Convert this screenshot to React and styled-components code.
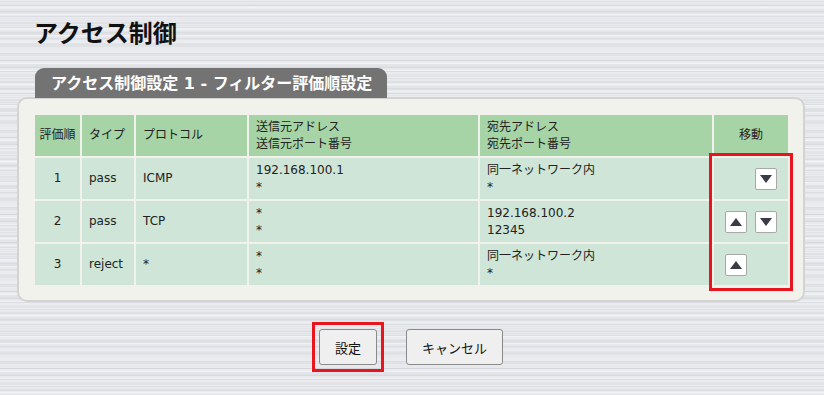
import { Fragment } from "react";
import styled, { createGlobalStyle } from "styled-components";

const GlobalStyle = createGlobalStyle`
  html, body {
    margin: 0;
    min-height: 395px;
  }
  body {
    font-family: "DejaVu Sans", "Noto Sans CJK JP", sans-serif;
    color: #222;
    background-color: #e2e4e8;
    background-image:
      repeating-linear-gradient(
        to bottom,
        rgba(255, 255, 255, 0.35) 0px,
        rgba(255, 255, 255, 0.35) 1px,
        transparent 1px,
        transparent 4px,
        rgba(0, 0, 0, 0.03) 4px,
        rgba(0, 0, 0, 0.03) 5px,
        transparent 5px,
        transparent 7px
      ),
      repeating-linear-gradient(
        to bottom,
        #dfe1e5 0px,
        #dfe1e5 2px,
        #e7e9ec 2px,
        #e7e9ec 5px,
        #dbdde2 5px,
        #dbdde2 6px,
        #eaecef 6px,
        #eaecef 9px,
        #e2e4e8 9px,
        #e2e4e8 11px
      );
  }
`;

const Page = styled.div`
  padding: 17px 19px 0 17px;
`;

const Title = styled.h1`
  margin: 0 0 22px 17px;
  font-family: "Noto Sans CJK JP", sans-serif;
  font-size: 24px;
  line-height: 29px;
  font-weight: 700;
  color: #111;
`;

const Tab = styled.div`
  display: inline-block;
  margin-left: 18px;
  height: 30px;
  padding: 0 15px 0 16px;
  background: #737373;
  border-radius: 9px 9px 0 0;
  color: #fff;
  font-family: "DejaVu Sans", "Noto Sans CJK JP", sans-serif;
  font-size: 16px;
  font-weight: 700;
  line-height: 31px;
  vertical-align: bottom;
`;

const Panel = styled.div`
  box-sizing: border-box;
  width: 788px;
  margin-top: -1px;
  padding: 16px 15px 15px 16px;
  background: #f2f2ec;
  border: 2px solid #d3d3d3;
  border-radius: 10px;
`;

const TableWrap = styled.div`
  position: relative;
`;

const Grid = styled.div`
  display: grid;
  grid-template-columns: 45px 52px 111px 229px 232px 74px;
  grid-auto-rows: 41px;
  gap: 2px;
  font-size: 12px;
  line-height: 17px;
`;

const HeadCell = styled.div`
  display: flex;
  flex-direction: column;
  justify-content: center;
  align-items: ${(p) => (p.$center ? "center" : "flex-start")};
  padding: 0 ${(p) => (p.$center ? "0" : "7px")};
  background: #a6d4a6;
  color: #222;
`;

const Cell = styled.div`
  display: flex;
  flex-direction: column;
  justify-content: center;
  align-items: ${(p) => (p.$center ? "center" : "flex-start")};
  padding: 0 ${(p) => (p.$center ? "0" : "7px")};
  background: #cee5d7;
  color: #222;
`;

const MoveCell = styled.div`
  display: flex;
  align-items: center;
  justify-content: center;
  gap: 8px;
  background: #cee5d7;
`;

const ArrowButton = styled.button`
  box-sizing: border-box;
  width: 22px;
  height: 22px;
  padding: 0;
  display: flex;
  align-items: center;
  justify-content: center;
  background: #fff;
  border: 1px solid #a8a8a8;
  border-radius: 2px;
  visibility: ${(p) => (p.$hidden ? "hidden" : "visible")};
`;

const Highlight = styled.div`
  position: absolute;
  left: 674px;
  top: 38px;
  width: 84px;
  height: 138px;
  box-sizing: border-box;
  border: 3px solid #e8141e;
  pointer-events: none;
`;

const Actions = styled.div`
  display: flex;
  justify-content: center;
  gap: 29px;
  margin-top: 27px;
`;

const ActionButton = styled.button`
  position: relative;
  height: 36px;
  padding: 0 15px;
  background: #efefef;
  border: 1px solid #8a8a8a;
  border-radius: 3px;
  font-family: "Noto Sans CJK JP", sans-serif;
  font-size: 13px;
  color: #111;

  &::after {
    content: "";
    display: ${(p) => (p.$marked ? "block" : "none")};
    position: absolute;
    inset: -8px;
    border: 3px solid #e8141e;
    pointer-events: none;
  }
`;

const Arrow = ({ up }) => (
  <svg width="12" height="8" viewBox="0 0 12 8">
    <polygon points={up ? "6,0 12,8 0,8" : "0,0 12,0 6,8"} fill="#3a3b44" />
  </svg>
);

const rules = [
  { no: 1, type: "pass", proto: "ICMP", src: ["192.168.100.1", "*"], dst: ["同一ネットワーク内", "*"] },
  { no: 2, type: "pass", proto: "TCP", src: ["*", "*"], dst: ["192.168.100.2", "12345"] },
  { no: 3, type: "reject", proto: "*", src: ["*", "*"], dst: ["同一ネットワーク内", "*"] },
];

const App = () => (
  <>
    <GlobalStyle />
    <Page>
      <Title>アクセス制御</Title>
      <Tab>アクセス制御設定 1 - フィルター評価順設定</Tab>
      <Panel>
        <TableWrap>
          <Grid>
            <HeadCell $center>評価順</HeadCell>
            <HeadCell>タイプ</HeadCell>
            <HeadCell>プロトコル</HeadCell>
            <HeadCell>
              <span>送信元アドレス</span>
              <span>送信元ポート番号</span>
            </HeadCell>
            <HeadCell>
              <span>宛先アドレス</span>
              <span>宛先ポート番号</span>
            </HeadCell>
            <HeadCell $center>移動</HeadCell>
            {rules.map((r, i) => (
              <Fragment key={r.no}>
                <Cell $center>{r.no}</Cell>
                <Cell>{r.type}</Cell>
                <Cell>{r.proto}</Cell>
                <Cell>
                  <span>{r.src[0]}</span>
                  <span>{r.src[1]}</span>
                </Cell>
                <Cell>
                  <span>{r.dst[0]}</span>
                  <span>{r.dst[1]}</span>
                </Cell>
                <MoveCell>
                  <ArrowButton $hidden={i === 0}>
                    <Arrow up />
                  </ArrowButton>
                  <ArrowButton $hidden={i === rules.length - 1}>
                    <Arrow />
                  </ArrowButton>
                </MoveCell>
              </Fragment>
            ))}
          </Grid>
          <Highlight />
        </TableWrap>
      </Panel>
      <Actions>
        <ActionButton $marked>設定</ActionButton>
        <ActionButton>キャンセル</ActionButton>
      </Actions>
    </Page>
  </>
);

export default App;
